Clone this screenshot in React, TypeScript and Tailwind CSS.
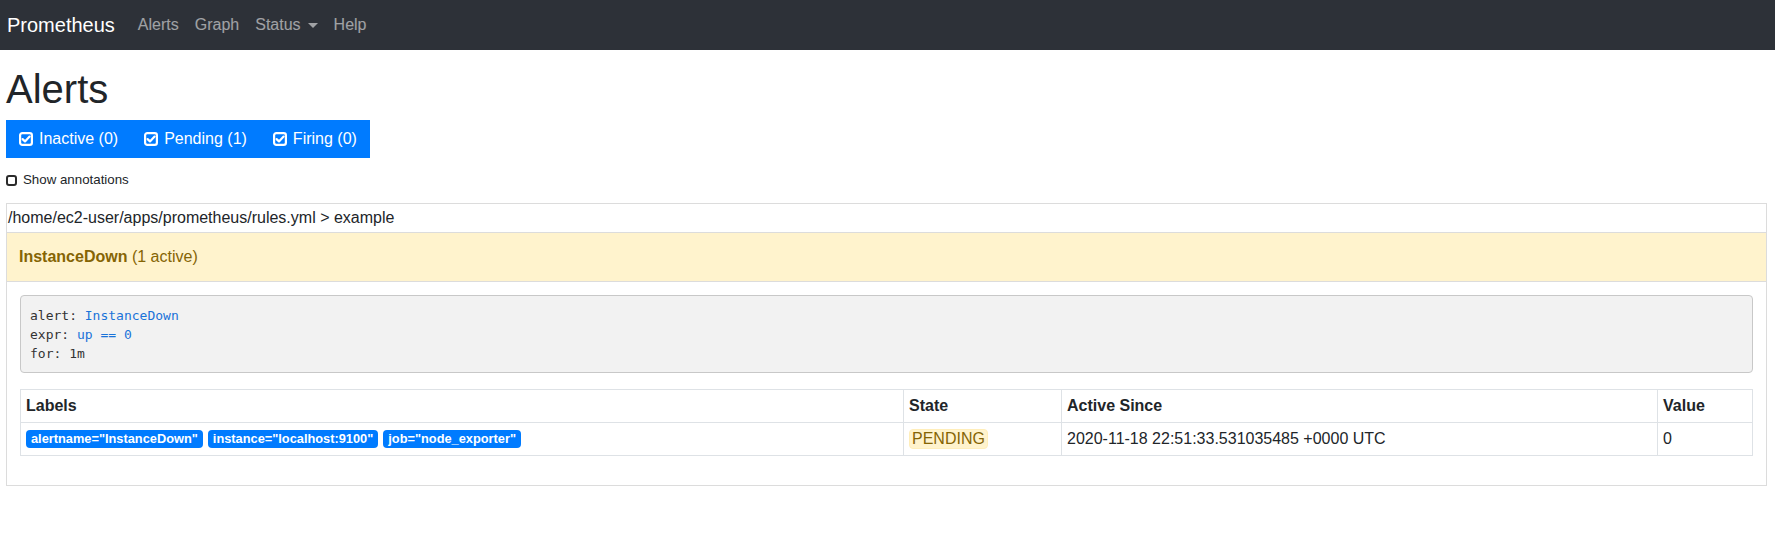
import React from "react";

const font = { fontFamily: '"Liberation Sans", Arial, sans-serif' };

function Caret() {
  return (
    <svg width="10" height="6" viewBox="0 0 10 6" className="ml-[7px] mt-[1px]">
      <path d="M0 0 L10 0 L5 5 Z" fill="currentColor" />
    </svg>
  );
}

function CheckSquare() {
  return (
    <svg width="14" height="14" viewBox="0 0 14 14" className="mr-[6px]">
      <rect x="1.1" y="1.1" width="11.8" height="11.8" rx="2.2" fill="none" stroke="currentColor" strokeWidth="2.2" />
      <path d="M3.6 7.1 L6 9.4 L10.6 4.6" fill="none" stroke="currentColor" strokeWidth="2.2" strokeLinecap="round" strokeLinejoin="round" />
    </svg>
  );
}

export default function App() {
  return (
    <div className="min-h-[558px] bg-white text-[#212529]" style={font}>
      <nav className="flex h-[50px] items-center bg-[#2d3138] pl-[7px]">
        <span className="mr-[15px] text-[20px] leading-[30px] text-white">Prometheus</span>
        <span className="px-[8px] text-[16px] leading-[24px] text-white/55">Alerts</span>
        <span className="px-[8px] text-[16px] leading-[24px] text-white/55">Graph</span>
        <span className="flex items-center px-[8px] text-[16px] leading-[24px] text-white/55">
          Status
          <Caret />
        </span>
        <span className="px-[8px] text-[16px] leading-[24px] text-white/55">Help</span>
      </nav>

      <main className="pl-[6px] pr-[8px]">
        <h1 className="mt-[15px] mb-[7px] text-[40px] font-medium leading-[48px]">Alerts</h1>

        <div className="inline-flex rounded-[4px] bg-[#007bff]">
          {["Inactive (0)", "Pending (1)", "Firing (0)"].map((t) => (
            <div
              key={t}
              className="flex items-center border border-[#007bff] px-[12px] py-[6px] text-[16px] leading-[24px] text-white"
            >
              <CheckSquare />
              {t}
            </div>
          ))}
        </div>

        <div className="mt-[12px] mb-[13px] flex items-center text-[13.3px] leading-[20px] text-[#212529]">
          <span className="inline-block h-[11px] w-[11px] rounded-[3px] border-2 border-[#2b2b2b]" />
          <span className="ml-[6px]">Show annotations</span>
        </div>

        <div className="border border-[#dcdcdc]">
          <div className="h-[29px] border-b border-[#dcdcdc] px-[1px] text-[16px] leading-[28px]">
            /home/ec2-user/apps/prometheus/rules.yml &gt; example
          </div>
          <div className="flex h-[49px] items-center border-b border-[#dcdcdc] bg-[#fff3cd] px-[12px] text-[16px] text-[#856404]">
            <span className="font-bold">InstanceDown</span>
            <span>&nbsp;(1 active)</span>
          </div>
          <div className="px-[13px] pt-[13px] pb-[13px]">
            <pre
              className="mb-[16px] rounded-[4px] border border-[#c8c8c8] bg-[#f2f2f2] px-[9px] py-[9.5px] text-[13px] leading-[19px] text-[#333]"
              style={{ fontFamily: '"DejaVu Sans Mono", "Liberation Mono", monospace' }}
            >
              <div>
                alert: <span className="text-[#1a73d9]">InstanceDown</span>
              </div>
              <div>
                expr: <span className="text-[#1a73d9]">up == 0</span>
              </div>
              <div>for: 1m</div>
            </pre>

            <table className="mb-[16px] w-full table-fixed border-collapse text-[16px] leading-[24px]">
              <colgroup>
                <col className="w-[883px]" />
                <col className="w-[158px]" />
                <col className="w-[596px]" />
                <col />
              </colgroup>
              <thead>
                <tr>
                  <th className="border border-[#dee2e6] px-[5px] py-[4px] text-left font-bold">Labels</th>
                  <th className="border border-[#dee2e6] px-[5px] py-[4px] text-left font-bold">State</th>
                  <th className="border border-[#dee2e6] px-[5px] py-[4px] text-left font-bold">Active Since</th>
                  <th className="border border-[#dee2e6] px-[5px] py-[4px] text-left font-bold">Value</th>
                </tr>
              </thead>
              <tbody>
                <tr>
                  <td className="border border-[#dee2e6] px-[5px] py-[4px]">
                    <div className="flex h-[24px] items-center gap-[5px]">
                      {['alertname="InstanceDown"', 'instance="localhost:9100"', 'job="node_exporter"'].map((b) => (
                        <span
                          key={b}
                          className="inline-block rounded-[4px] bg-[#007bff] px-[5px] py-[3px] text-[12.8px] font-bold leading-[12px] text-white"
                        >
                          {b}
                        </span>
                      ))}
                    </div>
                  </td>
                  <td className="border border-[#dee2e6] px-[5px] py-[4px]">
                    <span className="inline-block rounded-[4px] border border-[#ffeeba] bg-[#fff3cd] px-[2px] text-[16px] leading-[18px] text-[#856404]">
                      PENDING
                    </span>
                  </td>
                  <td className="border border-[#dee2e6] px-[5px] py-[4px]">2020-11-18 22:51:33.531035485 +0000 UTC</td>
                  <td className="border border-[#dee2e6] px-[5px] py-[4px]">0</td>
                </tr>
              </tbody>
            </table>
          </div>
        </div>
      </main>
    </div>
  );
}
